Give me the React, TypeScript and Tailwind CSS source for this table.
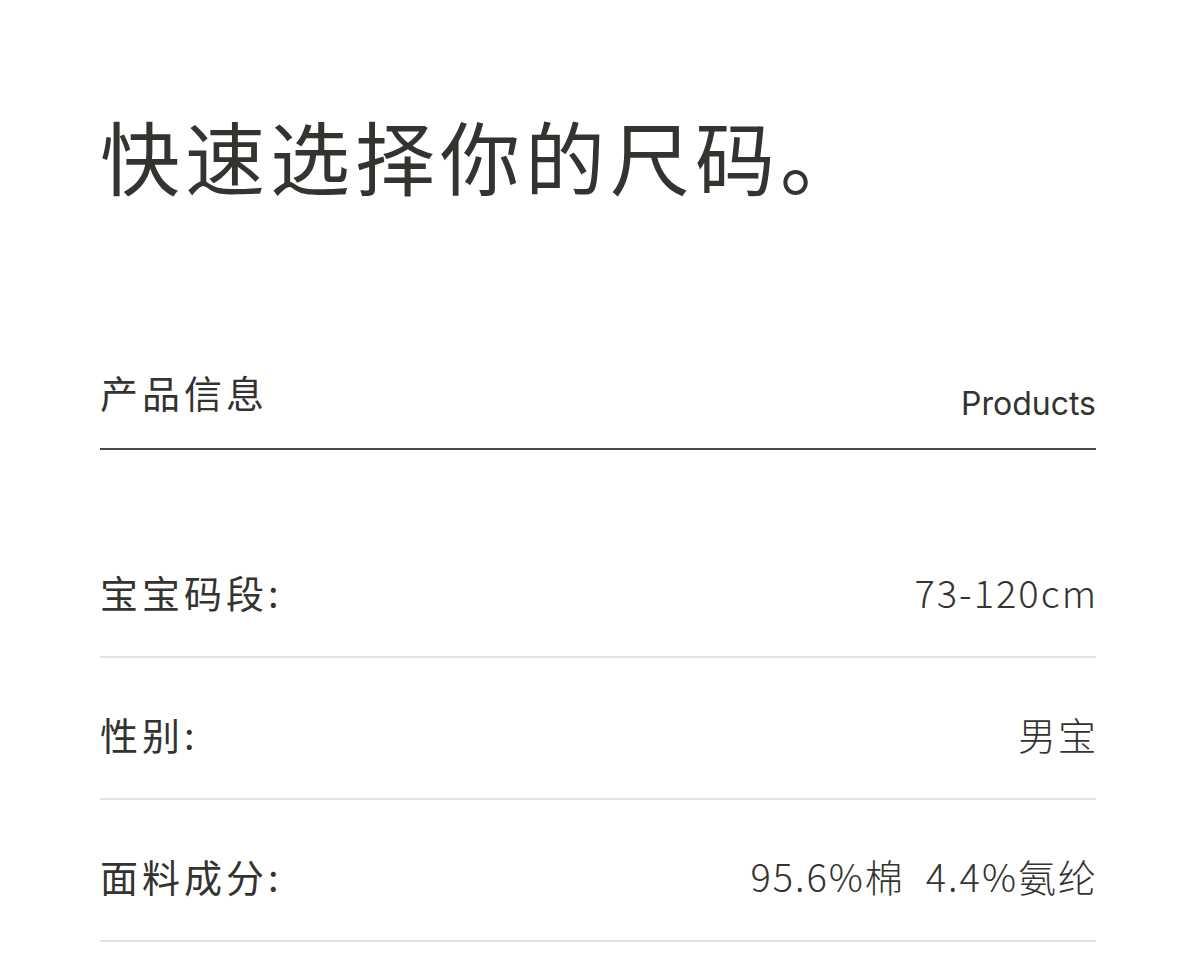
import React from 'react';

const cjk = '"Noto Sans CJK SC", "Noto Sans", sans-serif';

interface SpecRow {
  label: string;
  value: string;
}

const rows: SpecRow[] = [
  { label: '宝宝码段:', value: '73-120cm' },
  { label: '性别:', value: '男宝' },
  { label: '面料成分:', value: '95.6%棉  4.4%氨纶' },
];

export default function App() {
  return (
    <div className="min-h-[960px] w-[1200px] bg-white pl-[100px] pr-[104px] pt-[110px] text-[#333330]" style={{ fontFamily: cjk }}>
      {/* heading */}
      <h1 className="text-[80px] font-normal leading-[88px] tracking-[5px] text-[#33332f]">
        快速选择你的尺码。
      </h1>

      {/* section header */}
      <div className="mt-[174px] flex items-end justify-between border-b-2 border-[#4a4a48] pb-[36px]">
        <span className="text-[38px] leading-[40px] tracking-[4px]">产品信息</span>
        <span className="mb-[-12px] text-[32px] leading-[40px]" style={{ fontFamily: 'Inter, "Noto Sans", sans-serif' }}>
          Products
        </span>
      </div>

      {/* spec rows */}
      <div className="mt-[66px]">
        {rows.map((row) => (
          <div key={row.label} className="flex items-center justify-between border-b-2 border-[#e2e2e2] pt-[56px] pb-[44px]">
            <span className="text-[38px] leading-[40px] tracking-[4px]">{row.label}</span>
            <span className="mr-[-2px] whitespace-pre text-[38px] font-light leading-[40px] tracking-[2px]">{row.value}</span>
          </div>
        ))}
      </div>
    </div>
  );
}
